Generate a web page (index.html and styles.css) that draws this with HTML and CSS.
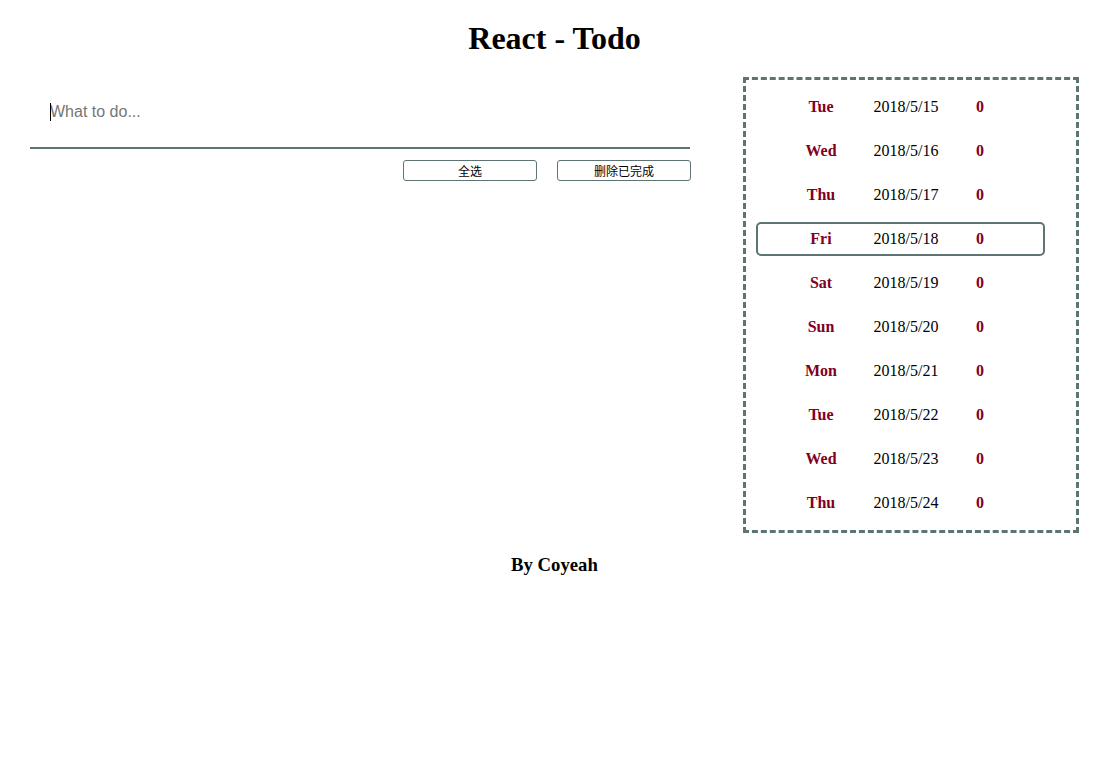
FILE: index.html
```html
<!DOCTYPE html>
<html lang="zh">
<head>
<meta charset="utf-8">
<title>React - Todo</title>
<link rel="stylesheet" href="styles.css">
</head>
<body>
<div class="page">
  <h1 class="title">React - Todo</h1>
  <div class="main">
    <section class="todo">
      <div class="input-wrap">
        <span class="caret"></span>
        <input class="todo-input" type="text" placeholder="What to do...">
      </div>
      <div class="actions">
        <button class="btn">全选</button>
        <button class="btn">删除已完成</button>
      </div>
    </section>
    <aside class="days">
      <div class="row"><span class="day">Tue</span><span class="date">2018/5/15</span><span class="count">0</span></div>
      <div class="row"><span class="day">Wed</span><span class="date">2018/5/16</span><span class="count">0</span></div>
      <div class="row"><span class="day">Thu</span><span class="date">2018/5/17</span><span class="count">0</span></div>
      <div class="row active"><span class="day">Fri</span><span class="date">2018/5/18</span><span class="count">0</span></div>
      <div class="row"><span class="day">Sat</span><span class="date">2018/5/19</span><span class="count">0</span></div>
      <div class="row"><span class="day">Sun</span><span class="date">2018/5/20</span><span class="count">0</span></div>
      <div class="row"><span class="day">Mon</span><span class="date">2018/5/21</span><span class="count">0</span></div>
      <div class="row"><span class="day">Tue</span><span class="date">2018/5/22</span><span class="count">0</span></div>
      <div class="row"><span class="day">Wed</span><span class="date">2018/5/23</span><span class="count">0</span></div>
      <div class="row"><span class="day">Thu</span><span class="date">2018/5/24</span><span class="count">0</span></div>
    </aside>
  </div>
  <h3 class="footer">By Coyeah</h3>
</div>
</body>
</html>
```
FILE: styles.css
```css
html, body {
  margin: 0;
  padding: 0;
  background: #fff;
}
body {
  font-family: "Liberation Serif", "Times New Roman", serif;
  color: #000;
}
.page {
  width: 1049px;
  margin-left: 30px;
  padding-top: 20px;
}
.title {
  margin: 0;
  font-size: 32px;
  line-height: 36px;
  font-weight: bold;
  text-align: center;
}
.main {
  display: flex;
  align-items: flex-start;
  margin-top: 21px;
  gap: 53px;
}
.todo {
  width: 660px;
}
.input-wrap {
  position: relative;
}
.caret {
  position: absolute;
  left: 20px;
  top: 26px;
  width: 1px;
  height: 18px;
  background: #000;
}
.todo-input {
  display: block;
  box-sizing: border-box;
  width: 100%;
  height: 72px;
  padding: 0 20px;
  border: none;
  border-bottom: 2px solid #5e7474;
  outline: none;
  font-family: "Liberation Sans", Arial, sans-serif;
  font-size: 16px;
  color: #000;
  background: transparent;
}
.todo-input::placeholder {
  color: #767676;
}
.actions {
  display: flex;
  justify-content: flex-end;
  gap: 20px;
  margin-top: 11px;
  margin-right: -1px;
}
.btn {
  box-sizing: border-box;
  width: 134px;
  height: 21px;
  padding: 0;
  border: 1px solid #5e7474;
  border-radius: 3px;
  background: #fff;
  font-family: "Noto Sans CJK SC", sans-serif;
  font-size: 12px;
  line-height: 18px;
  color: #000;
}
.days {
  box-sizing: border-box;
  width: 336px;
  border: 3px dashed #5e7474;
  padding: 10px 0 10px 10px;
  display: flex;
  flex-direction: column;
  gap: 10px;
}
.row {
  box-sizing: border-box;
  display: grid;
  grid-template-columns: 90px 80px 68px;
  align-items: center;
  width: 289px;
  height: 34px;
  padding-left: 18px;
  border: 2px solid transparent;
  border-radius: 5px;
  font-size: 16px;
}
.row.active {
  border-color: #5e7474;
}
.day, .date, .count {
  text-align: center;
}
.day, .count {
  font-weight: bold;
  color: #80001f;
}
.footer {
  margin: 21px 0 0;
  font-size: 18.72px;
  font-weight: bold;
  text-align: center;
}
```
